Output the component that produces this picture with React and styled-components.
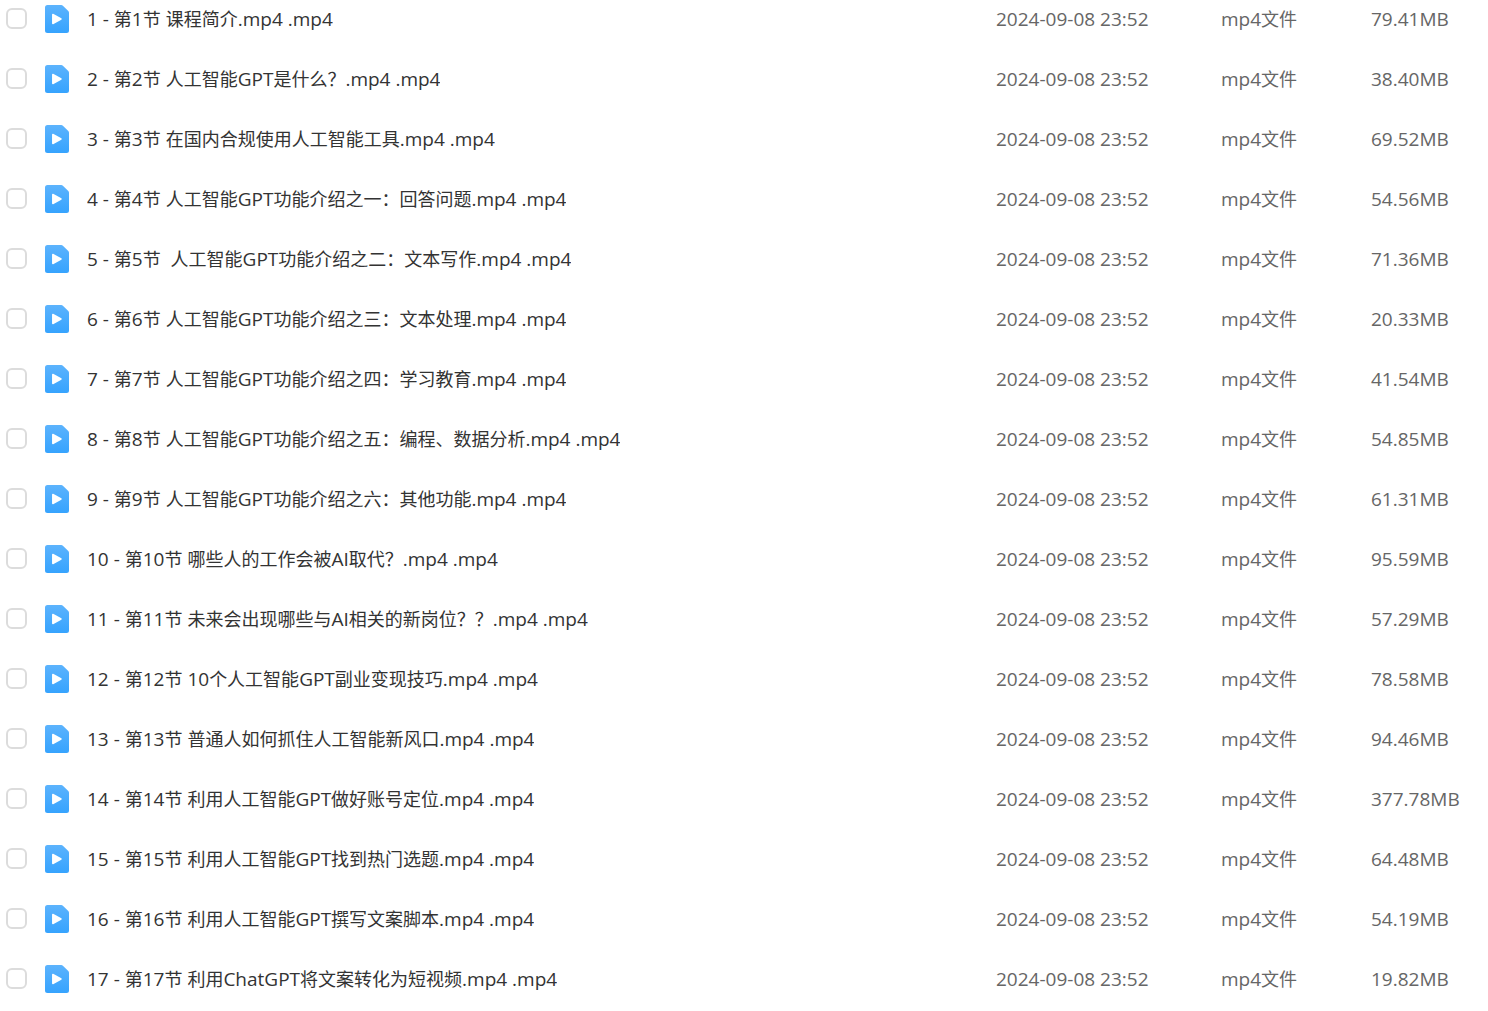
import React, { useState } from "react";
import styled, { createGlobalStyle } from "styled-components";

const files = [
    { name: "1 - 第1节 课程简介.mp4 .mp4", size: "79.41MB" },
    { name: "2 - 第2节 人工智能GPT是什么？.mp4 .mp4", size: "38.40MB" },
    { name: "3 - 第3节 在国内合规使用人工智能工具.mp4 .mp4", size: "69.52MB" },
    { name: "4 - 第4节 人工智能GPT功能介绍之一：回答问题.mp4 .mp4", size: "54.56MB" },
    { name: "5 - 第5节  人工智能GPT功能介绍之二：文本写作.mp4 .mp4", size: "71.36MB" },
    { name: "6 - 第6节 人工智能GPT功能介绍之三：文本处理.mp4 .mp4", size: "20.33MB" },
    { name: "7 - 第7节 人工智能GPT功能介绍之四：学习教育.mp4 .mp4", size: "41.54MB" },
    { name: "8 - 第8节 人工智能GPT功能介绍之五：编程、数据分析.mp4 .mp4", size: "54.85MB" },
    { name: "9 - 第9节 人工智能GPT功能介绍之六：其他功能.mp4 .mp4", size: "61.31MB" },
    { name: "10 - 第10节 哪些人的工作会被AI取代？.mp4 .mp4", size: "95.59MB" },
    { name: "11 - 第11节 未来会出现哪些与AI相关的新岗位？？.mp4 .mp4", size: "57.29MB" },
    { name: "12 - 第12节 10个人工智能GPT副业变现技巧.mp4 .mp4", size: "78.58MB" },
    { name: "13 - 第13节 普通人如何抓住人工智能新风口.mp4 .mp4", size: "94.46MB" },
    { name: "14 - 第14节 利用人工智能GPT做好账号定位.mp4 .mp4", size: "377.78MB" },
    { name: "15 - 第15节 利用人工智能GPT找到热门选题.mp4 .mp4", size: "64.48MB" },
    { name: "16 - 第16节 利用人工智能GPT撰写文案脚本.mp4 .mp4", size: "54.19MB" },
    { name: "17 - 第17节 利用ChatGPT将文案转化为短视频.mp4 .mp4", size: "19.82MB" },
];

// Chinese runs are set one size smaller than the latin text around them
const MixedText = ({ children }) =>
    children.split(/([\u3000-\uffef]+)/).map((part, i) => (
        i % 2 ? <Chinese key={i}>{part}</Chinese> : part
    ));

const VideoIcon = () => (
    <Icon viewBox="0 0 24 28" aria-hidden="true">
        <defs>
            <linearGradient id="fileBlue" x1="0" y1="0" x2="0" y2="1">
                <stop offset="0" stopColor="#5cb3fd" />
                <stop offset="1" stopColor="#36a3fe" />
            </linearGradient>
        </defs>
        <path d="M2.5 0H16.2Q17.2 0 17.900.7L23.300 6.100Q24 6.800 24 7.800V25.500A2.500 2.500 0 0 1 21.500 28H2.500A2.500 2.500 0 0 1 0 25.500V2.500A2.500 2.500 0 0 1 2.500 0Z" fill="url(#fileBlue)" />
        <path d="M7.800 9.500L16 14L7.800 18.500Z" fill="#fff" stroke="#fff" strokeWidth="1.500" strokeLinejoin="round" />
    </Icon>
);

const FileRow = ({ file, id }) => {

    const [checked, setChecked] = useState(false);

    return (
        <tr>
            <Cell>
                <NameLine>
                    <Checkbox id={id} type="checkbox" checked={checked} onChange={() => setChecked(!checked)} />
                    <VideoIcon />
                    <Name htmlFor={id}><MixedText>{file.name}</MixedText></Name>
                </NameLine>
            </Cell>
            <Cell>2024-09-08 23:52</Cell>
            <Cell><MixedText>mp4文件</MixedText></Cell>
            <Cell>{file.size}</Cell>
        </tr>
    );
}

const App = () => (
    <>
        <GlobalStyle />
        <FileTable>
            <colgroup>
                <col />
                <Column $width={225} />
                <Column $width={150} />
                <Column $width={117} />
            </colgroup>
            <tbody>
                {files.map((file, i) => (
                    <FileRow key={file.name} file={file} id={`file-${i + 1}`} />
                ))}
            </tbody>
        </FileTable>
    </>
)

export default App;

const GlobalStyle = createGlobalStyle`
    body {
        margin: 0;
        background: #fff;
        font-family: "Open Sans", "Noto Sans CJK SC", sans-serif;
    }
`;

const FileTable = styled.table`
    width: 100%;
    table-layout: fixed;
    border-collapse: collapse;
`;

const Column = styled.col`
    width: ${({ $width }) => $width}px;
`;

const Cell = styled.td`
    height: 60px;
    padding: 0;
    vertical-align: top;
    white-space: nowrap;
    color: #666;
    font-size: 19px;
    line-height: 38px;

    tr:last-child > & {
        height: 48px;
    }
`;

const NameLine = styled.div`
    display: flex;
    align-items: center;
    height: 37px;
    padding-left: 6px;
`;

const Checkbox = styled.input`
    appearance: none;
    flex: none;
    width: 21px;
    height: 21px;
    margin: 0 18px 0 0;
    border: 2px solid #dcdcdc;
    border-radius: 6px;
    background: #fff;
    cursor: pointer;

    &:checked {
        border-color: #36a3fe;
        background: #36a3fe;
    }
`;

const Icon = styled.svg`
    flex: none;
    width: 24px;
    height: 28px;
    margin-right: 18px;
`;

const Name = styled.label`
    align-self: flex-start;
    overflow: hidden;
    text-overflow: ellipsis;
    white-space: pre;
    color: #333;
    cursor: pointer;
`;

const Chinese = styled.span`
    font-size: 18px;
    line-height: 1;
`;
